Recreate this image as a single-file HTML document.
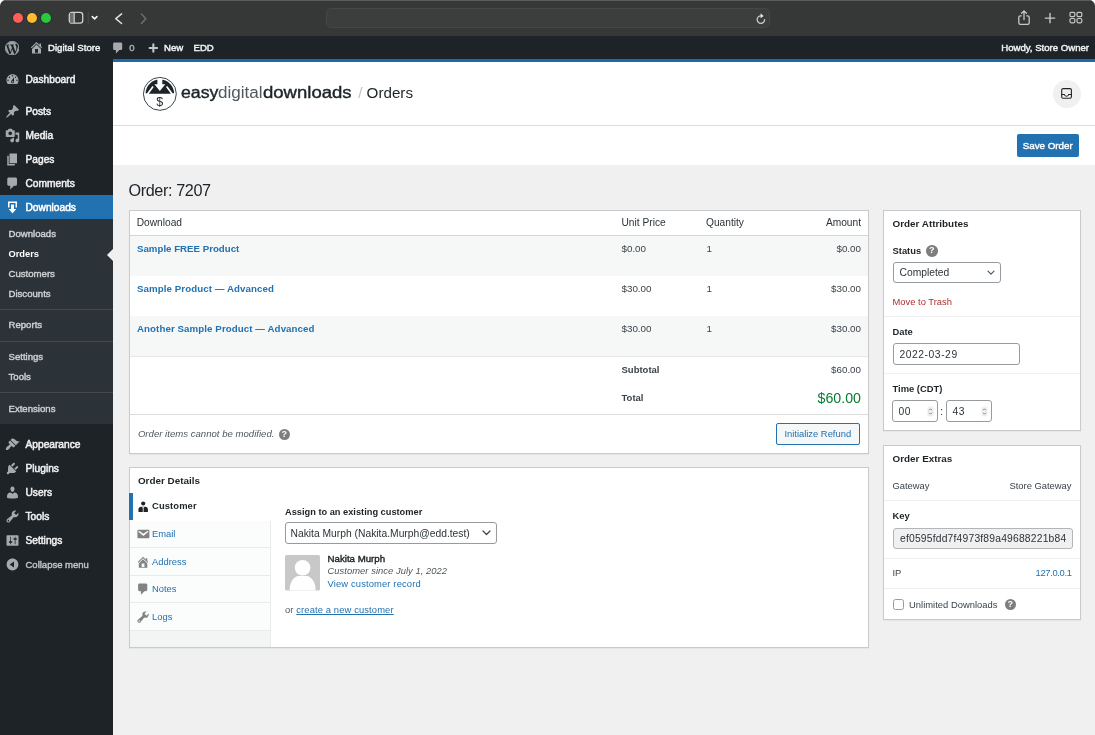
<!DOCTYPE html>
<html lang="en">
<head>
<meta charset="utf-8">
<title>Order 7207 - Easy Digital Downloads</title>
<style>
*{box-sizing:border-box;margin:0;padding:0}
html,body{width:1095px;height:735px;overflow:hidden;background:#fff}
body{font-family:"Liberation Sans",sans-serif;font-size:9.4px;color:#3c434a;position:relative;-webkit-font-smoothing:antialiased}
a{color:#2271b1;text-decoration:none}
.abs{position:absolute}
svg{display:block}
/* ---------- window chrome ---------- */
#win{will-change:transform;position:absolute;left:0;top:0;width:1095px;height:735px;border-radius:6px 6px 0 0;overflow:hidden;background:#f0f0f1}
#titlebar{position:absolute;left:0;top:0;width:1095px;height:36px;background:#363837;border-top:1px solid #5a5c5b}
.tl{position:absolute;top:12px;width:10px;height:10px;border-radius:50%;box-shadow:0 0 0 .6px rgba(0,0,0,.28)}
#urlbar{position:absolute;left:326px;top:7px;width:444px;height:20px;border-radius:5px;background:#3c3e3d;border:1px solid #454746}
/* ---------- admin bar ---------- */
#adminbar{position:absolute;left:0;top:36px;width:1095px;height:23px;background:#1d2327;color:#f0f0f1;font-size:9.600px;-webkit-text-stroke:.45px currentColor}
#adminbar .t{position:absolute;top:.100px;line-height:23px;white-space:nowrap}
/* ---------- sidebar ---------- */
#side{position:absolute;left:0;top:59px;width:113px;height:676px;background:#1d2327}
.mi{position:absolute;left:0;width:113px;height:24px;line-height:25.400px;color:#f0f0f1;font-size:10.200px;-webkit-text-stroke:.5px currentColor;padding-left:25.500px;white-space:nowrap}
.mi svg{position:absolute;left:5px;top:4.900px;width:15px;height:15px;fill:#a7aaad}
.mi.cur{background:#2271b1;color:#fff}
.mi.cur svg{fill:#fff}
#sub{position:absolute;left:0;top:219px;width:113px;height:205px;background:#2c3338}
.si{position:absolute;left:8.500px;color:#cdcfd2;font-size:9.600px;line-height:12px;white-space:nowrap;-webkit-text-stroke:.42px currentColor;margin-top:.300px}
.si.on{color:#fff;font-weight:bold;font-size:9.300px;-webkit-text-stroke:0}
.mi.col{color:#c3c4c7;-webkit-text-stroke:.4px currentColor;font-size:9.500px}
.sep{position:absolute;left:0;width:113px;height:1px;background:#43494e}

/* ---------- content ---------- */
#content{position:absolute;left:113px;top:59px;width:982px;height:676px}
#hdr{position:absolute;left:0;top:0;width:982px;height:67px;background:#fff;border-top:3px solid #1d69ae;border-bottom:1px solid #dcdcde}
#bar{position:absolute;left:0;top:67px;width:982px;height:39px;background:#fff}
.btn-p{position:absolute;background:#2271b1;color:#fff;border-radius:2px;text-align:center;white-space:nowrap}
.panel{position:absolute;background:#fff;border:1px solid #c9cacd;box-shadow:0 1px 1px rgba(0,0,0,.04)}
.med{-webkit-text-stroke:.4px currentColor}
.tx{position:absolute;white-space:nowrap;line-height:12px;margin-top:-.500px;font-size:9.400px}
#items .tx{font-size:9.800px}
#items .tx.b{font-size:9.500px}
.tx.lg{top:20.300px;font-size:16px;line-height:22px;color:#1d2327;transform-origin:0 0}
.b{font-weight:bold;color:#1d2327;font-size:9.400px}
.r{text-align:right}
.hr{position:absolute;left:0;right:0;height:1px;background:#f0f0f1}
.inp{position:absolute;background:#fff;border:1px solid #979a9f;border-radius:3px;color:#2c3338;font-size:10.300px;white-space:nowrap;overflow:hidden}
.help{position:absolute;width:11.500px;height:11.500px;border-radius:50%;background:#7e7e7e;color:#fff;font-size:9px;font-weight:bold;line-height:11.500px;text-align:center}
.tab{position:absolute;left:0;width:141px;height:27.500px;border-bottom:1px solid #e9eaeb;border-right:1px solid #e9eaeb;background:#fbfcfc}
.tab svg{position:absolute;left:6px;top:6.500px;width:14.100px;height:14.100px;fill:#828282}
.tab span{position:absolute;left:22.500px;top:7.300px;line-height:12px;color:#2271b1}
</style>
</head>
<body>
<div id="win">

<!-- TITLEBAR -->
<div id="titlebar">
  <div class="tl" style="left:13px;background:#fe5f57;top:12.300px"></div>
  <div class="tl" style="left:27px;background:#febc2e;top:12.300px"></div>
  <div class="tl" style="left:41.200px;background:#28c840;top:12.300px"></div>
  <svg class="abs" style="left:67px;top:9px" width="36" height="17" viewBox="0 0 36 17">
    <rect x="2.3" y="2.4" width="13.4" height="10.8" rx="2.6" fill="none" stroke="#cfd1d0" stroke-width="1.3"/>
    <rect x="3" y="3" width="4" height="9.6" fill="#6c6e6d"/>
    <line x1="7.2" y1="2.4" x2="7.2" y2="13.2" stroke="#cfd1d0" stroke-width="1.2"/>
    <line x1="21.2" y1="2" x2="21.2" y2="14" stroke="#4c4e4d" stroke-width="1"/>
    <polyline points="25.3,6.6 27.6,8.9 29.9,6.6" fill="none" stroke="#f2f2f2" stroke-width="1.6" stroke-linecap="round" stroke-linejoin="round"/>
  </svg>
  <svg class="abs" style="left:112px;top:9px" width="40" height="17" viewBox="0 0 40 17">
    <polyline points="9.6,3.9 3.8,8.7 9.6,13.5" fill="none" stroke="#dcdddc" stroke-width="1.5" stroke-linecap="round" stroke-linejoin="round"/>
    <polyline points="29.4,3.9 33.8,8.7 29.4,13.5" fill="none" stroke="#6e706f" stroke-width="1.4" stroke-linecap="round" stroke-linejoin="round"/>
  </svg>
  <div id="urlbar"></div>
  <svg class="abs" style="left:754px;top:11px" width="14" height="14" viewBox="0 0 14 14">
    <path d="M10.6 7.6a3.7 3.7 0 1 1-3.7-3.7" fill="none" stroke="#c9cbca" stroke-width="1.3" stroke-linecap="round"/>
    <path d="M6.6 1.2l3 2.7-3 2.4z" fill="#e4e5e4"/>
  </svg>
  <svg class="abs" style="left:1016px;top:8px" width="16" height="18" viewBox="0 0 16 18">
    <path d="M5.2 6.8H4.4c-1 0-1.6.6-1.6 1.6v5.4c0 1 .6 1.6 1.6 1.6h7.200c1 0 1.600-.6 1.600-1.600V8.400c0-1-.6-1.600-1.600-1.600h-.8" fill="none" stroke="#c6c8c7" stroke-width="1.3" stroke-linecap="round"/>
    <path d="M8 10.600V2.100M5.600 4.300L8 1.900l2.400 2.400" fill="none" stroke="#c6c8c7" stroke-width="1.3" stroke-linecap="round" stroke-linejoin="round"/>
  </svg>
  <svg class="abs" style="left:1043px;top:10px" width="14" height="14" viewBox="0 0 14 14">
    <path d="M7 2.400v9.400M2.300 7.100h9.400" stroke="#c6c8c7" stroke-width="1.4" stroke-linecap="round"/>
  </svg>
  <svg class="abs" style="left:1068px;top:10px" width="16" height="14" viewBox="0 0 16 14">
    <g fill="none" stroke="#c6c8c7" stroke-width="1.2">
      <rect x="2" y="1.400" width="4.800" height="4.300" rx="1.2"/><rect x="9" y="1.400" width="4.800" height="4.300" rx="1.2"/>
      <rect x="2" y="7.500" width="4.800" height="4.300" rx="1.2"/><rect x="9" y="7.500" width="4.800" height="4.300" rx="1.2"/>
    </g>
  </svg>
</div>

<!-- ADMIN BAR -->
<div id="adminbar">
  <svg class="abs" style="left:4.800px;top:4.500px" width="14.400" height="14.400" viewBox="0 0 20 20"><circle cx="10" cy="10" r="10" fill="#9ea1a5"/><path d="M20 10c0-5.510-4.490-10-10-10C4.480 0 0 4.490 0 10c0 5.520 4.480 10 10 10 5.510 0 10-4.480 10-10zM7.780 15.370L4.370 6.220c.550-.020 1.170-.080 1.170-.080.500-.060.440-1.130-.060-1.110 0 0-1.450.110-2.370.110-.180 0-.370 0-.580-.010C4.120 2.690 6.870 1.110 10 1.110c2.330 0 4.450.870 6.050 2.340-.680-.110-1.650.390-1.650 1.580 0 .740.450 1.360.900 2.100.350.610.550 1.360.550 2.460 0 1.490-1.400 5-1.400 5l-3.030-8.370c.540-.020.820-.170.820-.170.500-.050.440-1.250-.060-1.220 0 0-1.440.120-2.380.120-.870 0-2.330-.120-2.330-.120-.500-.030-.560 1.200-.060 1.220l.920.080 1.260 3.410zM17.410 10c.240-.640.740-1.870.430-4.250.700 1.290 1.050 2.710 1.050 4.250 0 3.290-1.730 6.240-4.400 7.780.970-2.590 1.940-5.200 2.920-7.780zM6.100 18.090C3.120 16.650 1.110 13.530 1.110 10c0-1.300.230-2.480.720-3.590C3.250 10.300 4.670 14.200 6.100 18.090zm4.030-6.630l2.580 6.980c-.860.290-1.760.450-2.710.450-.790 0-1.570-.110-2.290-.330.810-2.380 1.620-4.740 2.420-7.100z" fill="#1d2327"/><circle cx="10" cy="10" r="9.400" fill="none" stroke="#a7aaad" stroke-width="1.300"/></svg>
  <svg class="abs" style="left:29px;top:4.200px" width="15" height="15" viewBox="0 0 20 20" fill="#a7aaad"><path d="M16 8.500l1.530 1.530-1.060 1.060L10 4.620l-6.470 6.470-1.060-1.060L10 2.500l4 4v-2h2v4zm-6-2.460l6 5.990V18H4v-5.970zM12 17v-5H8v5h4z"/></svg>
  <span class="t" id="ab-site" style="left:48px">Digital Store</span>
  <svg class="abs" style="left:110.500px;top:5px" width="14" height="14" viewBox="0 0 20 20" fill="#a7aaad"><path d="M5 2h9c1.100 0 2 .9 2 2v7c0 1.100-.9 2-2 2h-2l-5 5v-5H5c-1.100 0-2-.9-2-2V4c0-1.100.9-2 2-2z"/></svg>
  <span class="t" id="ab-zero" style="left:129.300px;color:#a7aaad">0</span>
  <svg class="abs" style="left:145.500px;top:5.800px" width="14" height="14" viewBox="0 0 20 20" fill="#c3c4c7"><path d="M17 7v3h-5v5H9v-5H4V7h5V2h3v5h5z"/></svg>
  <span class="t" id="ab-new" style="left:164px">New</span>
  <span class="t" id="ab-edd" style="left:193.500px">EDD</span>
  <span class="t" id="ab-howdy" style="right:6px">Howdy, Store Owner</span>
</div>

<!-- SIDEBAR -->
<div id="side">
  <div class="mi " style="top:8px"><svg viewBox="0 0 20 20"><path d="M3.760 16h12.480c1.100-1.370 1.760-3.110 1.760-5 0-4.420-3.580-8-8-8s-8 3.580-8 8c0 1.890.660 3.630 1.760 5zM10 4c.550 0 1 .450 1 1s-.450 1-1 1-1-.450-1-1 .450-1 1-1zM6 6c.550 0 1 .450 1 1s-.450 1-1 1-1-.450-1-1 .450-1 1-1zm8 0c.550 0 1 .450 1 1s-.450 1-1 1-1-.450-1-1 .450-1 1-1zm-5.370 5.550L12 7v6c0 1.100-.9 2-2 2s-2-.9-2-2c0-.570.240-1.080.630-1.450zM4 10c.550 0 1 .450 1 1s-.450 1-1 1-1-.450-1-1 .450-1 1-1zm12 0c.550 0 1 .450 1 1s-.450 1-1 1-1-.450-1-1 .450-1 1-1zm-5 3c0-.550-.450-1-1-1s-1 .450-1 1 .450 1 1 1 1-.450 1-1z"/></svg>Dashboard</div>
  <div class="mi " style="top:40px"><svg viewBox="0 0 20 20"><path d="M10.440 3.020l1.820-1.820 6.360 6.350-1.830 1.820c-1.050-.680-2.480-.570-3.410.360l-.750.750c-.920.930-1.040 2.350-.350 3.410l-1.830 1.820-2.410-2.410-2.800 2.790c-.420.420-3.380 2.710-3.800 2.290s1.860-3.390 2.280-3.810l2.790-2.790L4.100 9.360l1.830-1.820c1.050.690 2.480.570 3.400-.360l.750-.750c.930-.920 1.050-2.350.360-3.410z"/></svg>Posts</div>
  <div class="mi " style="top:64px"><svg viewBox="0 0 20 20"><path d="M13 11V4c0-.550-.450-1-1-1h-1.670L9 1H5L3.670 3H2c-.550 0-1 .450-1 1v7c0 .550.450 1 1 1h10c.550 0 1-.450 1-1zM7 4.500c1.380 0 2.500 1.120 2.500 2.500S8.380 9.500 7 9.500 4.500 8.380 4.500 7 5.620 4.500 7 4.500zM14 6h5v10.500c0 1.380-1.120 2.500-2.500 2.500S14 17.880 14 16.500s1.120-2.500 2.500-2.500c.170 0 .340.020.500.050V9h-3V6zm-4 8.050V13h2v3.500c0 1.380-1.120 2.500-2.500 2.500S7 17.880 7 16.500 8.120 14 9.500 14c.170 0 .340.020.500.050z"/></svg>Media</div>
  <div class="mi " style="top:88px"><svg viewBox="0 0 20 20"><path d="M6 15V2h10v13H6zm-1 1h8v2H3V5h2v11z"/></svg>Pages</div>
  <div class="mi " style="top:112px"><svg viewBox="0 0 20 20"><path d="M5 2h9c1.100 0 2 .9 2 2v7c0 1.100-.9 2-2 2h-2l-5 5v-5H5c-1.100 0-2-.9-2-2V4c0-1.100.9-2 2-2z"/></svg>Comments</div>
  <div class="mi cur" style="top:136px"><svg viewBox="0 0 20 20"><path d="M14.010 4v6h2V2H4v8h2.010V4h8zm-2 2v6h3l-5 6-5-6h3V6h4z"/></svg>Downloads</div>
  <div id="sub" style="top:160px">
    <div class="si" style="top:9px;">Downloads</div>
    <div class="si on" style="top:29px">Orders</div>
    <div class="si" style="top:49px;">Customers</div>
    <div class="si" style="top:69px;">Discounts</div>
    <div class="sep" style="top:89.500px"></div>
    <div class="si" style="top:100px;">Reports</div>
    <div class="sep" style="top:121.500px"></div>
    <div class="si" style="top:132px;">Settings</div>
    <div class="si" style="top:152px;">Tools</div>
    <div class="sep" style="top:173px"></div>
    <div class="si" style="top:184px;">Extensions</div>
    <div class="abs" style="right:0;top:29.700px;width:0;height:0;border:6px solid transparent;border-right-color:#f0f0f1;border-left-width:0"></div>
  </div>
  <div class="mi " style="top:373px"><svg viewBox="0 0 20 20"><path d="M14.480 11.060L7.410 3.990l1.500-1.500c.500-.560 2.300-.470 3.510.320 1.210.800 1.430 1.280 2.910 2.100 1.180.640 2.450 1.260 4.450.850zm-.710.710L6.700 4.700 4.930 6.470c-.390.390-.390 1.020 0 1.410l1.060 1.060c.390.390.390 1.030 0 1.420-.600.600-1.430 1.110-2.210 1.690-.350.260-.700.530-1.010.840C1.430 14.230.400 16.080 1.400 17.070c.990 1 2.840-.030 4.180-1.360.310-.310.580-.660.850-1.020.570-.780 1.080-1.610 1.690-2.210.390-.390 1.020-.390 1.410 0l1.060 1.060c.390.390 1.020.390 1.410 0z"/></svg>Appearance</div>
  <div class="mi " style="top:397px"><svg viewBox="0 0 20 20"><path d="M13.110 4.360L9.870 7.600 8 5.730l3.240-3.240c.350-.340 1.050-.200 1.560.320.520.510.660 1.210.310 1.550zm-8 1.770l.910-1.120 9.010 9.010-1.190.840c-.710.710-2.630 1.160-3.820 1.160H6.140L4.900 17.260c-.590.590-1.540.590-2.120 0-.590-.580-.590-1.530 0-2.120l1.240-1.240v-3.880c0-1.130.400-3.190 1.090-3.890zm7.260 3.970l3.240-3.240c.340-.350 1.040-.210 1.550.310.520.510.660 1.210.310 1.550l-3.240 3.250z"/></svg>Plugins</div>
  <div class="mi " style="top:421px"><svg viewBox="0 0 20 20"><path d="M10 9.250c-2.270 0-2.730-3.440-2.730-3.440C7 4.020 7.820 2 9.970 2c2.160 0 2.980 2.020 2.710 3.810 0 0-.410 3.440-2.680 3.440zm0 2.570L12.720 10c2.390 0 4.520 2.330 4.520 4.530v2.490s-3.650 1.130-7.240 1.130c-3.650 0-7.240-1.130-7.240-1.130v-2.490c0-2.250 1.940-4.480 4.470-4.480z"/></svg>Users</div>
  <div class="mi " style="top:445px"><svg viewBox="0 0 20 20"><path d="M16.680 9.770c-1.340 1.340-3.300 1.670-4.950.990l-5.410 6.520c-.990.990-2.590.990-3.580 0s-.990-2.590 0-3.570l6.520-5.420c-.680-1.650-.350-3.610.990-4.950 1.280-1.280 3.120-1.620 4.720-1.060l-2.890 2.890 2.820 2.820 2.860-2.870c.530 1.580.180 3.390-1.080 4.650zM3.810 16.210c.400.390 1.040.390 1.430 0 .400-.400.400-1.040 0-1.430-.390-.400-1.030-.400-1.430 0-.390.390-.390 1.030 0 1.430z"/></svg>Tools</div>
  <div class="mi " style="top:469px"><svg viewBox="0 0 20 20"><path d="M18 16V4c0-.550-.450-1-1-1H3c-.550 0-1 .450-1 1v12c0 .550.450 1 1 1h14c.550 0 1-.450 1-1zM8 11h1c.550 0 1 .450 1 1s-.450 1-1 1H8v1.500c0 .280-.220.500-.500.500s-.500-.220-.500-.500V13H6c-.550 0-1-.450-1-1s.450-1 1-1h1V5.500c0-.280.220-.500.500-.500s.500.220.500.500V11zm5-2h-1c-.550 0-1-.450-1-1s.450-1 1-1h1V5.500c0-.280.220-.500.500-.500s.500.220.500.500V7h1c.550 0 1 .450 1 1s-.450 1-1 1h-1v5.500c0 .280-.220.500-.500.500s-.500-.220-.500-.500V9z"/></svg>Settings</div>
  <div class="mi col" style="top:493px"><svg viewBox="0 0 20 20"><path d="M10 2.160c4.330 0 7.840 3.510 7.840 7.840s-3.510 7.840-7.840 7.840S2.160 14.330 2.160 10 5.670 2.160 10 2.160zm2 11.720V6.120L6.180 9.970z"/></svg>Collapse menu</div>
</div>

<!-- CONTENT -->
<div id="content">
  <div id="hdr">
    <svg class="abs" style="left:27px;top:12px" width="40" height="40" viewBox="0 0 40 40">
      <circle cx="19.860" cy="19.860" r="16.450" fill="#fff" stroke="#3c434a" stroke-width="1"/>
      <clipPath id="dome"><circle cx="19.860" cy="19.860" r="14.300"/></clipPath>
      <polygon points="0,0 40,0 40,18.500 29.400,19.700 9.800,19.700 0,18.800" clip-path="url(#dome)" fill="#1d2327"/>
      <path d="M7.200 20.500L13.060 12.600M32.500 20.500L26.660 12.600" stroke="#fff" stroke-width="1.700" fill="none"/>
      <path d="M17.400 4.500h4.900v5.800h3L19.860 17l-5.460-6.700h3z" fill="#fff"/>
      <text x="19.700" y="31.600" style="font-family:'Liberation Sans',sans-serif;font-size:12.500px" fill="#1d2327" text-anchor="middle">$</text>
    </svg>
    <div class="tx lg med" id="lg1" style="left:67.700px;transform:scaleX(1.105)">easy</div>
    <div class="tx lg" id="lg2" style="left:105.400px;color:#50575e;transform:scaleX(1.065)">digital</div>
    <div class="tx lg med" id="lg3" style="left:150px;transform:scaleX(1.158)">downloads</div>
    <div class="tx" id="crumb0" style="left:245.200px;top:20.600px;font-size:15.200px;line-height:22px;color:#c3c4c7">/</div>
    <div class="tx" id="crumb" style="left:253.600px;top:20.600px;font-size:15.200px;line-height:22px;color:#1d2327">Orders</div>
    <div class="abs" style="left:939.500px;top:17.500px;width:28.500px;height:28.500px;border-radius:50%;background:#f0f0f1"></div>
    <svg class="abs" style="left:947px;top:25px" width="13" height="13" viewBox="0 0 13 13">
      <rect x="1.700" y="1.600" width="9.700" height="9.700" rx="1.500" fill="none" stroke="#1d2327" stroke-width="1.100"/>
      <path d="M1.700 7.500h2.600c.2 1 .9 1.700 2.200 1.700s2-.7 2.200-1.700h2.700" fill="none" stroke="#1d2327" stroke-width="1.100"/>
    </svg>
  </div>
  <div id="bar">
    <div class="btn-p" id="save" style="left:903.500px;top:8px;width:62.500px;height:23px;line-height:23px;font-size:9.800px;-webkit-text-stroke:.4px #fff">Save Order</div>
  </div>
  <div class="tx" id="h1" style="left:15.500px;top:121px;font-size:16.200px;line-height:20px;color:#1d2327;letter-spacing:-.38px">Order: 7207</div>

  <!-- ORDER ITEMS PANEL -->
  <div class="panel" id="items" style="left:15.500px;top:151px;width:740px;height:244px">
    <div class="tx th" style="left:7.200px;top:6.500px;font-size:10.200px;color:#2c3338">Download</div>
    <div class="tx th" style="left:492px;top:6.500px;font-size:10.200px;color:#2c3338">Unit Price</div>
    <div class="tx th" style="left:576.500px;top:6.500px;font-size:10.200px;color:#2c3338">Quantity</div>
    <div class="tx th r" style="right:6.500px;top:6.500px;font-size:10.200px;color:#2c3338">Amount</div>
    <div class="abs" style="left:0;right:0;top:24px;height:1px;background:#d5d6d9"></div>
    <div class="abs" style="left:0;right:0;top:25px;height:40px;background:#f6f7f7"></div>
    <div class="abs" style="left:0;right:0;top:105px;height:40px;background:#f6f7f7"></div>
    <div class="abs" style="left:0;right:0;top:145px;height:1px;background:#e6e7e9"></div>
    <a class="tx lnk" style="left:7.500px;top:32px;font-weight:bold;font-size:9.700px">Sample FREE Product</a>
    <a class="tx lnk" style="left:7.500px;top:72px;font-weight:bold;font-size:9.700px;letter-spacing:.09px">Sample Product — Advanced</a>
    <a class="tx lnk" style="left:7.500px;top:112px;font-weight:bold;font-size:9.700px;letter-spacing:.09px">Another Sample Product — Advanced</a>
    <div class="tx" style="left:492px;top:32px">$0.00</div><div class="tx" style="left:577px;top:32px">1</div><div class="tx r" style="right:6.500px;top:32px">$0.00</div>
    <div class="tx" style="left:492px;top:72px">$30.00</div><div class="tx" style="left:577px;top:72px">1</div><div class="tx r" style="right:6.500px;top:72px">$30.00</div>
    <div class="tx" style="left:492px;top:112px">$30.00</div><div class="tx" style="left:577px;top:112px">1</div><div class="tx r" style="right:6.500px;top:112px">$30.00</div>
    <div class="tx b" style="left:492px;top:153px;color:#3c434a">Subtotal</div><div class="tx r" style="right:6.500px;top:153px">$60.00</div>
    <div class="tx b" style="left:492px;top:181.500px;color:#3c434a">Total</div><div class="tx r" id="total" style="right:6.500px;top:178px;font-size:14.200px;line-height:18px;color:#0a7a34">$60.00</div>
    <div class="abs" style="left:0;right:0;top:203px;height:1px;background:#dcdcde"></div>
    <div class="tx" style="left:8.400px;top:217.500px;font-style:italic;color:#50575e;font-size:9.600px">Order items cannot be modified.</div>
    <div class="help" style="left:149px;top:217.500px">?</div>
    <div class="abs" id="refund" style="left:646px;top:212px;width:84.500px;height:21.500px;border:1px solid #2271b1;border-radius:2px;background:#f6f7f7;color:#2271b1;text-align:center;line-height:19px;font-size:9.400px;white-space:nowrap">Initialize Refund</div>
  </div>

  <!-- ORDER DETAILS PANEL -->
  <div class="panel" id="details" style="left:15.500px;top:408px;width:740px;height:181px"><div class="abs" style="left:0;top:.600px;width:738px;height:178px">
    <div class="tx b" style="left:8.400px;top:6.900px;font-size:9.900px">Order Details</div>
    <div class="abs" style="left:0;top:25px;width:141px;height:153.400px;background:#f3f4f4;border-right:1px solid #e9eaeb"></div>
    <div class="abs" style="left:0;top:24.500px;width:141.500px;height:27.900px;background:#fff"></div>
    <div class="abs" style="left:-1px;top:24.500px;width:4.400px;height:27px;background:#2271b1"></div>
    <svg class="abs" style="left:8px;top:32px" width="12" height="12" viewBox="0 0 12 12" fill="#1d2327">
      <circle cx="5.200" cy="2.500" r="2.100"/>
      <path d="M.5 10.900V8.300C.5 6.700 1.600 5.700 3 5.700h4.400c1.400 0 2.500 1 2.500 2.600v2.600z"/>
      <path d="M4.300 5.600L5.200 7.200l.9-1.600M5.200 7.200v3.800" stroke="#fff" stroke-width=".8" fill="none"/>
    </svg>
    <div class="tx b" style="left:22.500px;top:32.200px;letter-spacing:.12px">Customer</div>
    <div class="tab" style="top:52.400px"><svg viewBox="0 0 20 20"><path d="M3.870 4h13.250C18.370 4 19 4.590 19 5.790v8.420c0 1.190-.630 1.790-1.880 1.790H3.870c-1.250 0-1.880-.6-1.880-1.790V5.790c0-1.200.630-1.790 1.880-1.790zm6.620 8.600l6.740-5.530c.240-.2.430-.660.130-1.070-.290-.410-.820-.420-1.170-.170l-5.700 3.860L4.800 5.830c-.350-.250-.880-.240-1.170.170-.300.410-.110.870.130 1.070z"/></svg><span>Email</span></div>
    <div class="tab" style="top:79.900px"><svg viewBox="0 0 20 20"><path d="M16 8.500l1.530 1.530-1.060 1.060L10 4.620l-6.470 6.470-1.060-1.060L10 2.500l4 4v-2h2v4zm-6-2.460l6 5.990V18H4v-5.970zM12 17v-5H8v5h4z"/></svg><span>Address</span></div>
    <div class="tab" style="top:107.400px"><svg viewBox="0 0 20 20"><path d="M5 2h9c1.100 0 2 .9 2 2v7c0 1.100-.9 2-2 2h-2l-5 5v-5H5c-1.100 0-2-.9-2-2V4c0-1.100.9-2 2-2z"/></svg><span>Notes</span></div>
    <div class="tab" style="top:134.900px"><svg viewBox="0 0 20 20"><path d="M16.680 9.770c-1.340 1.340-3.300 1.670-4.950.990l-5.410 6.520c-.990.990-2.590.990-3.580 0s-.990-2.590 0-3.570l6.520-5.420c-.680-1.650-.350-3.610.990-4.950 1.280-1.280 3.120-1.620 4.720-1.060l-2.890 2.890 2.820 2.820 2.860-2.870c.530 1.580.180 3.390-1.080 4.650zM3.810 16.210c.400.390 1.040.390 1.430 0 .400-.400.400-1.040 0-1.430-.390-.400-1.030-.400-1.430 0-.390.390-.390 1.030 0 1.430z"/></svg><span>Logs</span></div>
    <div class="tx b" style="left:155.500px;top:37.500px;font-size:9.250px">Assign to an existing customer</div>
    <div class="inp" style="left:155.500px;top:53px;width:212px;height:22px;line-height:21px;padding-left:4.500px">Nakita Murph (Nakita.Murph@edd.test)
      <svg class="abs" style="right:5.500px;top:7.500px" width="9" height="6" viewBox="0 0 9 6"><polyline points="1,1 4.500,4.500 8,1" fill="none" stroke="#3c434a" stroke-width="1.200" stroke-linecap="round" stroke-linejoin="round"/></svg>
    </div>
    <svg class="abs" style="left:155.500px;top:86.500px" width="35" height="35.500" viewBox="0 0 35 35.500">
      <rect width="35" height="35.500" rx="1.500" fill="#c8c8c8"/>
      <circle cx="17.600" cy="12.800" r="7.800" fill="#fff"/>
      <path d="M4.600 35.500c0-8 3.500-13 8-14.500h10c4.500 1.500 8 6.500 8 14.500z" fill="#fff"/>
    </svg>
    <div class="tx med" style="left:198px;top:85px;font-size:9.700px;color:#1d2327">Nakita Murph</div>
    <div class="tx" style="left:198px;top:97.400px;font-style:italic;color:#50575e;letter-spacing:.05px">Customer since July 1, 2022</div>
    <a class="tx" style="left:198px;top:110.300px;letter-spacing:.14px">View customer record</a>
    <div class="tx" style="left:155.500px;top:135.500px;color:#50575e;letter-spacing:.12px">or <a style="text-decoration:underline">create a new customer</a></div>
  </div></div>

  <!-- ORDER ATTRIBUTES -->
  <div class="panel" id="attrs" style="left:770px;top:151px;width:198px;height:220.500px">
    <div class="tx b" style="left:8.500px;top:7px;font-size:9.900px">Order Attributes</div>
    <div class="tx b" style="left:8.500px;top:34px">Status</div>
    <div class="help" style="left:42px;top:34.200px">?</div>
    <div class="inp" style="left:8.500px;top:51px;width:108px;height:21px;line-height:19px;padding-left:6px">Completed
      <svg class="abs" style="right:4.500px;top:6.500px" width="8" height="6" viewBox="0 0 8 6"><polyline points="1,1.200 4,4.200 7,1.200" fill="none" stroke="#50575e" stroke-width="1.200" stroke-linecap="round" stroke-linejoin="round"/></svg>
    </div>
    <div class="tx" style="left:8.500px;top:85px;color:#b32d2e">Move to Trash</div>
    <div class="hr" style="top:105px"></div>
    <div class="tx b" style="left:8.500px;top:115px">Date</div>
    <div class="inp" style="left:8.500px;top:132px;width:127.500px;height:21.500px;line-height:21px;padding-left:6px;letter-spacing:.55px">2022-03-29</div>
    <div class="hr" style="top:162px"></div>
    <div class="tx b" style="left:8.500px;top:172.500px">Time (CDT)</div>
    <div class="inp" style="left:8px;top:189px;width:46px;height:21.500px;line-height:21px;padding-left:5.500px;letter-spacing:.4px">00<svg class="abs" style="right:3px;top:4.500px" width="7" height="11" viewBox="0 0 7 11"><rect x=".3" y=".3" width="6.400" height="10.400" rx="3.200" fill="#f0f0f1"/><path d="M2 4.300l1.500-1.500L5 4.300M2 6.700l1.500 1.500L5 6.700" fill="none" stroke="#646970" stroke-width=".8"/></svg></div>
    <div class="tx" style="left:56.300px;top:195.500px;color:#1d2327;font-size:10px">:</div>
    <div class="inp" style="left:62px;top:189px;width:46px;height:21.500px;line-height:21px;padding-left:5.500px;letter-spacing:.4px">43<svg class="abs" style="right:3px;top:4.500px" width="7" height="11" viewBox="0 0 7 11"><rect x=".3" y=".3" width="6.400" height="10.400" rx="3.200" fill="#f0f0f1"/><path d="M2 4.300l1.500-1.500L5 4.300M2 6.700l1.500 1.500L5 6.700" fill="none" stroke="#646970" stroke-width=".8"/></svg></div>
  </div>

  <!-- ORDER EXTRAS -->
  <div class="panel" id="extras" style="left:770px;top:386px;width:198px;height:175px">
    <div class="tx b" style="left:8.500px;top:7px;font-size:9.900px">Order Extras</div>
    <div class="tx" style="left:8.500px;top:34px">Gateway</div><div class="tx r" style="right:8.500px;top:34px">Store Gateway</div>
    <div class="hr" style="top:54.300px"></div>
    <div class="tx b" style="left:8.500px;top:64.300px">Key</div>
    <div class="inp" style="left:8.500px;top:81.500px;width:180.500px;height:21.500px;line-height:20.500px;padding-left:6.500px;background:#f0f0f1;border-color:#b2b5b9;letter-spacing:.2px">ef0595fdd7f4973f89a49688221b84</div>
    <div class="hr" style="top:111.500px"></div>
    <div class="tx" style="left:8.500px;top:121.200px">IP</div><a class="tx r" style="right:8.500px;top:121.200px;letter-spacing:-.35px">127.0.0.1</a>
    <div class="hr" style="top:142px"></div>
    <div class="abs" style="left:8.500px;top:153px;width:11px;height:11px;border:1px solid #979a9f;border-radius:2.500px;background:#fff"></div>
    <div class="tx" style="left:25px;top:153.500px;letter-spacing:.02px">Unlimited Downloads</div>
    <div class="help" style="left:120.500px;top:152.500px">?</div>
  </div>
</div>

</div>
</body>
</html>
